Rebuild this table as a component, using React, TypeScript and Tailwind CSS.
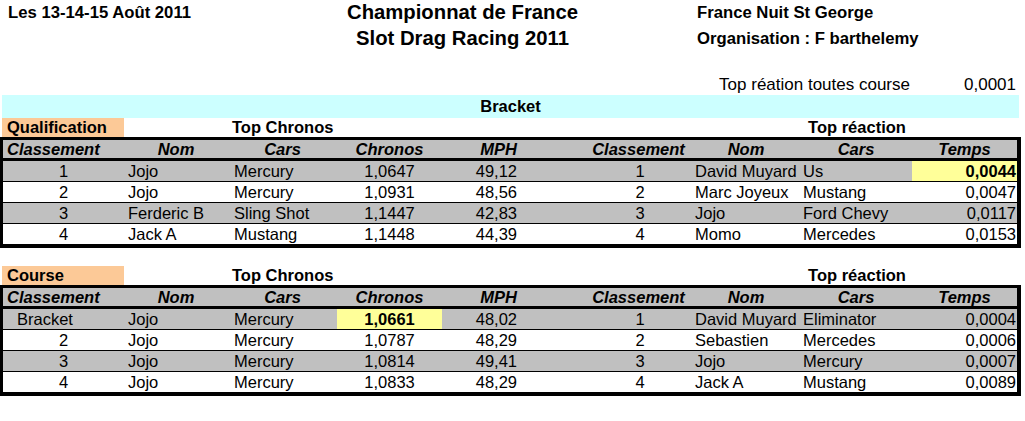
import React from "react";

type Row = {
  rank: string;
  rankLeft?: boolean;
  nom: string;
  car: string;
  chrono: string;
  chronoHi?: boolean;
  mph: string;
  rrank: string;
  rnom: string;
  rcar: string;
  temps: string;
  tempsHi?: boolean;
};

const qual: Row[] = [
  { rank: "1", nom: "Jojo", car: "Mercury", chrono: "1,0647", mph: "49,12", rrank: "1", rnom: "David Muyard", rcar: "Us", temps: "0,0044", tempsHi: true },
  { rank: "2", nom: "Jojo", car: "Mercury", chrono: "1,0931", mph: "48,56", rrank: "2", rnom: "Marc Joyeux", rcar: "Mustang", temps: "0,0047" },
  { rank: "3", nom: "Ferderic B", car: "Sling Shot", chrono: "1,1447", mph: "42,83", rrank: "3", rnom: "Jojo", rcar: "Ford Chevy", temps: "0,0117" },
  { rank: "4", nom: "Jack A", car: "Mustang", chrono: "1,1448", mph: "44,39", rrank: "4", rnom: "Momo", rcar: "Mercedes", temps: "0,0153" },
];

const course: Row[] = [
  { rank: "Bracket", rankLeft: true, nom: "Jojo", car: "Mercury", chrono: "1,0661", chronoHi: true, mph: "48,02", rrank: "1", rnom: "David Muyard", rcar: "Eliminator", temps: "0,0004" },
  { rank: "2", nom: "Jojo", car: "Mercury", chrono: "1,0787", mph: "48,29", rrank: "2", rnom: "Sebastien", rcar: "Mercedes", temps: "0,0006" },
  { rank: "3", nom: "Jojo", car: "Mercury", chrono: "1,0814", mph: "49,41", rrank: "3", rnom: "Jojo", rcar: "Mercury", temps: "0,0007" },
  { rank: "4", nom: "Jojo", car: "Mercury", chrono: "1,0833", mph: "48,29", rrank: "4", rnom: "Jack A", rcar: "Mustang", temps: "0,0089" },
];

const cols =
  "grid grid-cols-[121px_104px_109px_105px_77px_69px_104px_108px_112px_105px]";

function Header() {
  return (
    <div className={`${cols} h-[18px] leading-[18px] bg-[#c0c0c0] font-bold italic border-b-[3px] border-black box-content`}>
      <div className="pl-[4px] text-left">Classement</div>
      <div className="text-center">Nom</div>
      <div className="text-center">Cars</div>
      <div className="text-center">Chronos</div>
      <div className="text-right pr-[2px]">MPH</div>
      <div />
      <div className="text-center pr-[3px]">Classement</div>
      <div className="text-center">Nom</div>
      <div className="text-center">Cars</div>
      <div className="text-center">Temps</div>
    </div>
  );
}

function DataRow({ r, i }: { r: Row; i: number }) {
  const bg = i % 2 === 0 ? "bg-[#c0c0c0]" : "bg-white";
  const border = i > 0 ? "border-t border-black" : "";
  return (
    <div className={`${cols} h-[20px] leading-[20px] box-content ${bg} ${border}`}>
      <div className={r.rankLeft ? "pl-[14px] text-left" : "text-center"}>{r.rank}</div>
      <div className="pl-[4px] whitespace-nowrap">{r.nom}</div>
      <div className="pl-[6px] whitespace-nowrap">{r.car}</div>
      <div className={`text-center ${r.chronoHi ? "bg-[#ffff99] font-bold" : ""}`}>{r.chrono}</div>
      <div className="text-right pr-[2px]">{r.mph}</div>
      <div />
      <div className="text-center">{r.rrank}</div>
      <div className="pl-[3px] whitespace-nowrap">{r.rnom}</div>
      <div className="pl-[3px] whitespace-nowrap">{r.rcar}</div>
      <div className={`text-right pr-[1px] ${r.tempsHi ? "bg-[#ffff99] font-bold" : ""}`}>{r.temps}</div>
    </div>
  );
}

function Section({ label, rows }: { label: string; rows: Row[] }) {
  return (
    <div>
      <div className="flex h-[19px] leading-[19px] font-bold">
        <div className="ml-[2px] w-[122px] bg-[#fcc997] pl-[5px]">{label}</div>
        <div className="ml-[108px] w-[200px]">Top Chronos</div>
        <div className="ml-[375px] w-[100px] text-center">Top réaction</div>
      </div>
      <div className="w-[1021px] border-[3px] border-r-4 border-b-4 border-black">
        <Header />
        {rows.map((r, i) => (
          <DataRow key={i} r={r} i={i} />
        ))}
      </div>
    </div>
  );
}

export default function App() {
  return (
    <div
      className="w-[1025px] h-[421px] bg-white text-black text-[16.5px] overflow-hidden"
      style={{ fontFamily: '"Liberation Sans", Arial, sans-serif' }}
    >
      <div className="grid grid-cols-[337px_251px_109px_1fr] font-bold">
        <div className="pl-[8px] h-[25px] leading-[25px] text-[16.7px]">Les 13-14-15 Août 2011</div>
        <div className="text-center text-[20.3px] h-[25px] leading-[25px]">Championnat de France</div>
        <div />
        <div className="h-[25px] leading-[25px] text-[16.7px]">France Nuit St George</div>
        <div className="h-[25px]" />
        <div className="text-center text-[20.3px] h-[25px] leading-[27px]">Slot Drag Racing 2011</div>
        <div />
        <div className="h-[25px] leading-[27px] text-[16.7px]">Organisation : F barthelemy</div>
      </div>
      <div className="h-[25px]" />
      <div className="flex h-[20px] leading-[20px] text-[17px]">
        <div className="w-[912px] text-right pr-[2px]">Top réation toutes course</div>
        <div className="w-[105px] text-right pr-[1px]">0,0001</div>
      </div>
      <div className="ml-[2px] w-[1017px] h-[23px] leading-[23px] bg-[#ccffff] text-center font-bold">
        Bracket
      </div>
      <Section label="Qualification" rows={qual} />
      <div className="h-[18px]" />
      <Section label="Course" rows={course} />
    </div>
  );
}
